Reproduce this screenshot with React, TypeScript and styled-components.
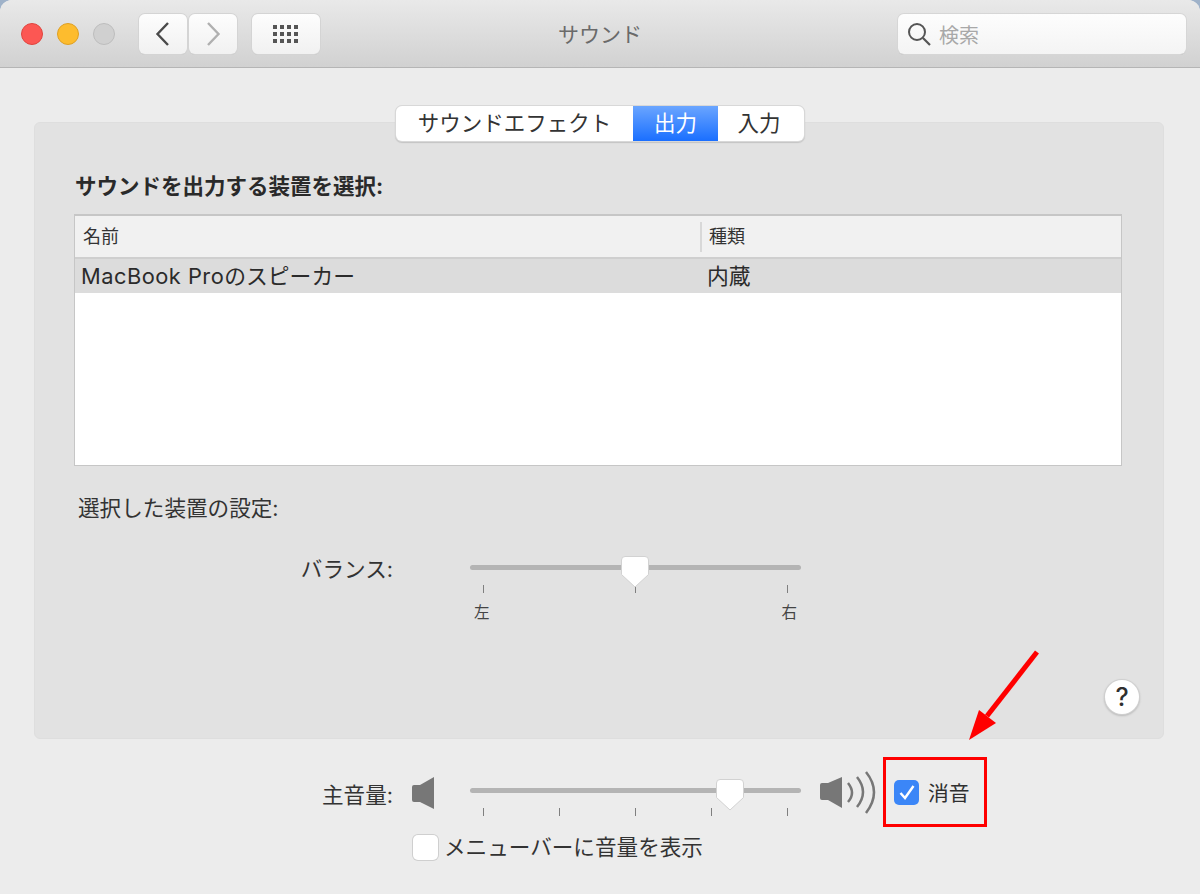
import React from "react";
import styled, { createGlobalStyle } from "styled-components";

const Global = createGlobalStyle`
  html, body { margin: 0; padding: 0; background: #9fb2c9; }
  body { font-family: "Inter", "Noto Sans CJK JP", sans-serif; color: #2b2b2b; }
  * { box-sizing: border-box; }
`;

const Win = styled.div`
  position: relative;
  width: 1200px;
  height: 894px;
  background: #ececec;
  border-radius: 12px 12px 0 0;
  overflow: hidden;
  display: flex;
  flex-direction: column;
`;

const TitleBar = styled.header`
  position: relative;
  flex: none;
  height: 68px;
  display: flex;
  align-items: center;
  padding: 1px 14px 0 21px;
  background: linear-gradient(#e9e9e9, #d1d1d1);
  border-bottom: 1px solid #b5b5b5;
`;

const Light = styled.span<{ $c: string; $b: string }>`
  width: 22px;
  height: 22px;
  border-radius: 50%;
  background: ${(p) => p.$c};
  border: 1px solid ${(p) => p.$b};
  margin-right: 14px;
`;

const ToolBtn = styled.button<{ $w: number; $ml: number }>`
  width: ${(p) => p.$w}px;
  height: 40px;
  margin-left: ${(p) => p.$ml}px;
  padding: 0;
  display: flex;
  align-items: center;
  justify-content: center;
  border: none;
  border-radius: 6px;
  background: linear-gradient(#fdfdfd, #f1f1f1);
  box-shadow: 0 0 0 1px #d4d4d4, 0 1px 0 #bbb;
`;

const Title = styled.div`
  position: absolute;
  left: 0;
  right: 0;
  top: 21px;
  text-align: center;
  font-size: 21px;
  line-height: 28px;
  color: #6a6a6a;
`;

const Search = styled.div`
  margin-left: auto;
  width: 288px;
  height: 40px;
  display: flex;
  align-items: center;
  gap: 8px;
  padding-left: 9px;
  border-radius: 6px;
  background: linear-gradient(#fdfdfd, #f4f4f4);
  box-shadow: 0 0 0 1px #d6d6d6, 0 1px 0 #aaa;
  font-size: 20px;
  color: #a8a8a8;
`;

const Body = styled.main`
  flex: 1;
  display: flex;
  flex-direction: column;
  padding: 54px 36px 0 34px;
`;

const Panel = styled.section`
  position: relative;
  height: 617px;
  background: #e2e2e2;
  border: 1px solid #dedede;
  border-radius: 6px;
  padding: 0 41px 0 39px;
  display: flex;
  flex-direction: column;
`;

const Tabs = styled.nav`
  align-self: center;
  margin: -17px 0 0 4px;
  height: 35px;
  display: flex;
  background: #fff;
  border-radius: 6px;
  box-shadow: 0 0 0 1px #d8d8d8, 0 1px 1px 1px #c4c4c4;
`;

const Tab = styled.div<{ $w: number; $on?: boolean; $pr?: number }>`
  width: ${(p) => p.$w}px;
  display: flex;
  align-items: center;
  justify-content: center;
  padding: 0 ${(p) => p.$pr ?? 0}px 5px 0;
  font-size: 21.5px;
  color: ${(p) => (p.$on ? "#fff" : "#333")};
  background: ${(p) => (p.$on ? "linear-gradient(#6aa5ff, #1a6fff)" : "transparent")};
`;

const Heading = styled.h2`
  margin: 31px 0 14px 1px;
  font-size: 21.5px;
  line-height: 28px;
  font-weight: 700;
  color: #2a2a2a;
`;

const Table = styled.div`
  height: 252px;
  background: #fff;
  border: 2px solid #c6c6c6;
  border-bottom-width: 1px;
  border-right-width: 1px;
  border-left-width: 1px;
`;

const TableHead = styled.div`
  height: 43px;
  display: grid;
  grid-template-columns: 625px 1fr;
  align-items: center;
  background: #f1f1f1;
  border-bottom: 2px solid #cfcfcf;
  font-size: 18px;
  color: #333;
`;

const HeadCell = styled.div<{ $sep?: boolean }>`
  height: 30px;
  line-height: 30px;
  padding-left: ${(p) => (p.$sep ? 7 : 8)}px;
  border-left: ${(p) => (p.$sep ? "2px solid #d8d8d8" : "none")};
`;

const TableRow = styled.div`
  height: 34px;
  display: grid;
  grid-template-columns: 626px 1fr;
  align-items: center;
  background: #dcdcdc;
  padding: 0 0 3px 6px;
  font-size: 21.8px;
  color: #2b2b2b;
`;

const Latin = styled.span`
  letter-spacing: 0.5px;
`;

const SubHeading = styled.div`
  margin: 28px 0 0 4px;
  font-size: 21.6px;
  line-height: 28px;
  color: #333;
`;

const SliderRow = styled.div<{ $label: number; $gap: number; $mt: number }>`
  display: grid;
  grid-template-columns: ${(p) => p.$label}px ${(p) => p.$gap}px 331px;
  margin-top: ${(p) => p.$mt}px;
  align-items: start;
`;

const RowLabel = styled.div`
  text-align: right;
  font-size: 21.6px;
  line-height: 28px;
  color: #333;
`;

const Slider = styled.div`
  position: relative;
  padding-top: 10px;
`;

const Track = styled.div`
  height: 5px;
  border-radius: 3px;
  background: #b4b4b4;
`;

const Thumb = styled.svg<{ $x: number }>`
  position: absolute;
  left: ${(p) => p.$x}px;
  top: 0;
`;

const Ticks = styled.div`
  display: flex;
  justify-content: space-between;
  padding: 15px 13px 0;
`;

const Tick = styled.i`
  width: 1px;
  height: 8px;
  background: #7f7f7f;
`;

const TickLabels = styled.div`
  display: flex;
  justify-content: space-between;
  padding: 9px 4px 0 4px;
  font-size: 15.5px;
  line-height: 22px;
  color: #444;
`;

const Help = styled.div`
  position: absolute;
  right: 24px;
  bottom: 24px;
  width: 34px;
  height: 34px;
  border-radius: 50%;
  background: #fff;
  box-shadow: 0 0 0 1px #d0d0d0, 0 1px 2px 1px #bbb;
  display: flex;
  align-items: center;
  justify-content: center;
  font-family: "Inter", sans-serif;
  font-size: 25px;
  font-weight: 500;
  color: #2f2f2f;
`;

const VolumeRow = styled.div`
  display: flex;
  align-items: flex-start;
  margin-top: 18px;
`;

const VolumeLabel = styled(RowLabel)`
  width: 359px;
  margin-top: 24px;
`;

const VolumeSlider = styled(Slider)`
  width: 331px;
  margin: 21px 0 0 34px;
`;

const LowIcon = styled.svg`
  margin: 19px 0 0 19px;
  flex: none;
`;

const HighIcon = styled.svg`
  margin: 14px 0 0 19px;
  flex: none;
`;

const MuteBox = styled.div`
  width: 104px;
  height: 70px;
  margin-left: 5px;
  border: 3px solid #f00;
  display: flex;
  align-items: center;
  padding-left: 8px;
  gap: 9px;
  font-size: 20.8px;
  color: #2f2f2f;
`;

const CheckOn = styled.span`
  width: 25px;
  height: 25px;
  border-radius: 5px;
  background: #3b86f7;
  display: flex;
  align-items: center;
  justify-content: center;
`;

const MenuRow = styled.div`
  display: flex;
  align-items: center;
  gap: 6px;
  margin: 5px 0 0 379px;
  font-size: 21.6px;
  line-height: 30px;
  color: #333;
`;

const CheckOff = styled.span`
  width: 25px;
  height: 25px;
  border-radius: 5px;
  background: #fff;
  box-shadow: 0 0 0 1px #cfcfcf;
`;

const Arrow = styled.svg`
  position: absolute;
  left: 960px;
  top: 645px;
`;

const ThumbShape = ({ x }: { x: number }) => (
  <Thumb $x={x} width="30" height="34" viewBox="0 0 30 34">
    <path
      d="M5 1.5h20a3.5 3.5 0 0 1 3.5 3.5v14.5L15 32 1.5 19.5V5A3.5 3.5 0 0 1 5 1.5z"
      fill="#fff"
      stroke="#d2d2d2"
      strokeWidth="1"
    />
  </Thumb>
);

export default function App() {
  return (
    <>
      <Global />
      <Win>
        <TitleBar>
          <Light $c="#fc5753" $b="#e0443e" />
          <Light $c="#fdbc2e" $b="#dfa023" />
          <Light $c="#d0d0d0" $b="#bdbdbd" />
          <ToolBtn $w={48} $ml={10}>
            <svg width="18" height="26" viewBox="0 0 18 26">
              <path d="M14 2 3.500 13 14 24" fill="none" stroke="#4a4a4a" strokeWidth="2.400" />
            </svg>
          </ToolBtn>
          <ToolBtn $w={48} $ml={2}>
            <svg width="18" height="26" viewBox="0 0 18 26">
              <path d="M4 2 14.500 13 4 24" fill="none" stroke="#b0b0b0" strokeWidth="2.400" />
            </svg>
          </ToolBtn>
          <ToolBtn $w={68} $ml={15}>
            <svg width="28" height="20" viewBox="0 0 28 20" fill="#555">
              {[0, 1, 2].flatMap((r) =>
                [0, 1, 2, 3].map((c) => <rect key={`${r}-${c}`} x={1 + c * 7} y={1 + r * 7} width="4" height="4" />)
              )}
            </svg>
          </ToolBtn>
          <Title>サウンド</Title>
          <Search>
            <svg width="24" height="26" viewBox="0 0 24 26">
              <circle cx="10" cy="11" r="8" fill="none" stroke="#555" strokeWidth="2" />
              <path d="m16 17 7 7" stroke="#555" strokeWidth="2.200" />
            </svg>
            検索
          </Search>
        </TitleBar>
        <Body>
          <Panel>
            <Tabs>
              <Tab $w={237}>サウンドエフェクト</Tab>
              <Tab $w={85} $on>出力</Tab>
              <Tab $w={86} $pr={4}>入力</Tab>
            </Tabs>
            <Heading>サウンドを出力する装置を選択:</Heading>
            <Table>
              <TableHead>
                <HeadCell>名前</HeadCell>
                <HeadCell $sep>種類</HeadCell>
              </TableHead>
              <TableRow>
                <span>
                  <Latin>MacBook Pro</Latin>のスピーカー
                </span>
                <span>内蔵</span>
              </TableRow>
            </Table>
            <SubHeading>選択した装置の設定:</SubHeading>
            <SliderRow $label={319} $gap={77} $mt={33}>
              <RowLabel>バランス:</RowLabel>
              <span />
              <Slider>
                <Track />
                <ThumbShape x={150} />
                <Ticks>
                  <Tick />
                  <Tick />
                  <Tick />
                </Ticks>
                <TickLabels>
                  <span>左</span>
                  <span>右</span>
                </TickLabels>
              </Slider>
            </SliderRow>
            <Help>?</Help>
          </Panel>
          <VolumeRow>
            <VolumeLabel>主音量:</VolumeLabel>
            <LowIcon width="24" height="36" viewBox="0 0 24 36">
              <path d="M2 9h6L22 1v32L8 26H2a2 2 0 0 1-2-2V11a2 2 0 0 1 2-2z" fill="#777" />
            </LowIcon>
            <VolumeSlider>
              <Track />
              <ThumbShape x={245} />
              <Ticks>
                <Tick />
                <Tick />
                <Tick />
                <Tick />
                <Tick />
              </Ticks>
            </VolumeSlider>
            <HighIcon width="58" height="46" viewBox="0 0 58 46">
              <path d="M2 12h6L22 6v31L8 29H2a2 2 0 0 1-2-2V14a2 2 0 0 1 2-2z" fill="#777" />
              <path
                d="M28 12q8 10 0 19M37 6q12 15 0 30M46 1q16 20 0 41"
                fill="none"
                stroke="#777"
                strokeWidth="2.500"
              />
            </HighIcon>
            <MuteBox>
              <CheckOn>
                <svg width="18" height="18" viewBox="0 0 18 18">
                  <path d="m2.500 10 4.500 5L15.500 3" fill="none" stroke="#fff" strokeWidth="2.400" />
                </svg>
              </CheckOn>
              消音
            </MuteBox>
          </VolumeRow>
          <MenuRow>
            <CheckOff />
            メニューバーに音量を表示
          </MenuRow>
        </Body>
        <Arrow width="90" height="105" viewBox="0 0 90 105">
          <path d="M77 7 27 71" stroke="#f00" strokeWidth="5" fill="none" />
          <path d="M9 95 19 65l17 13z" fill="#f00" />
        </Arrow>
      </Win>
    </>
  );
}
